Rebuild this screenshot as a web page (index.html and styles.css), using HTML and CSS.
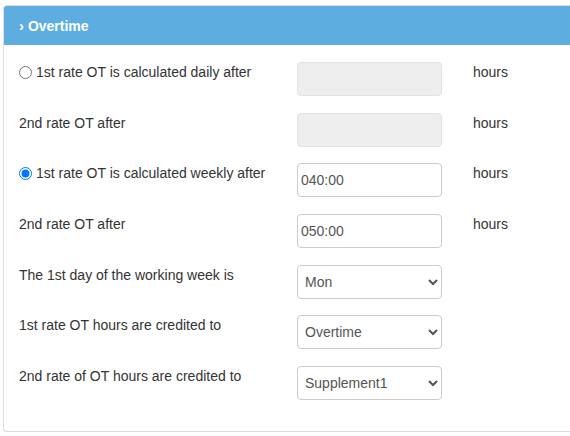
FILE: index.html
```html
<!DOCTYPE html>
<html lang="en">
<head>
    <meta charset="UTF-8">
    <meta name="viewport" content="width=device-width, initial-scale=1.0">
    <title>Overtime</title>
    <link rel="stylesheet" href="styles.css">
</head>
<body>
    <div class="panel">
        <div class="panel-heading">
            <span class="chevron">&rsaquo;</span> Overtime
        </div>

        <div class="panel-body">
            <!-- Daily overtime -->
            <label class="field-label">
                <input type="radio" name="ot-mode" value="daily">
                1st rate OT is calculated daily after
            </label>
            <input type="text" class="form-control" disabled>
            <span class="unit">hours</span>

            <label class="field-label">2nd rate OT after</label>
            <input type="text" class="form-control" disabled>
            <span class="unit">hours</span>

            <!-- Weekly overtime -->
            <label class="field-label">
                <input type="radio" name="ot-mode" value="weekly" checked>
                1st rate OT is calculated weekly after
            </label>
            <input type="text" class="form-control" value="040:00">
            <span class="unit">hours</span>

            <label class="field-label">2nd rate OT after</label>
            <input type="text" class="form-control" value="050:00">
            <span class="unit">hours</span>

            <label class="field-label">The 1st day of the working week is</label>
            <select class="form-control">
                <option>Mon</option>
                <option>Tue</option>
                <option>Wed</option>
                <option>Thu</option>
                <option>Fri</option>
                <option>Sat</option>
                <option>Sun</option>
            </select>
            <span class="unit"></span>

            <label class="field-label">1st rate OT hours are credited to</label>
            <select class="form-control">
                <option>Overtime</option>
                <option>Supplement1</option>
                <option>Supplement2</option>
            </select>
            <span class="unit"></span>

            <label class="field-label">2nd rate of OT hours are credited to</label>
            <select class="form-control">
                <option>Supplement1</option>
                <option>Overtime</option>
                <option>Supplement2</option>
            </select>
            <span class="unit"></span>
        </div>
    </div>
</body>
</html>
```

FILE: styles.css
```css
body {
    font-family: "Liberation Sans", Arial, sans-serif;
    font-size: 14px;
    line-height: 20px;
    color: #333;
    background-color: #fff;
    margin: 0;
    padding: 5px 0 0 3px;
}
/* the panel runs on past the right edge of the window */
.panel {
    border: 1px solid #ddd;
    border-right: none;
    border-radius: 4px 0 0 4px;
    background: #fff;
}
.panel-heading {
    height: 39px;
    line-height: 39px;
    padding: 0 15px;
    background-color: #5dade0;
    color: #fff;
    font-weight: bold;
    border-radius: 3px 0 0 0;
}
.chevron {
    font-size: 15px;
}
.panel-body {
    display: grid;
    grid-template-columns: 278px 145px auto;
    row-gap: 16.67px;
    padding: 17px 15px 31px;
}
.field-label {
    display: flex;
    align-items: flex-start;
    gap: 4px;
}
.field-label input[type="radio"] {
    width: 13px;
    height: 13px;
    margin: 4px 0 0 0;
}
.form-control {
    box-sizing: border-box;
    height: 34px;
    width: 145px;
    margin: 0;
    padding: 0 3px;
    font-family: "Liberation Sans", Arial, sans-serif;
    font-size: 14px;
    color: #555;
    background-color: #fff;
    border: 1px solid #ccc;
    border-radius: 4px;
}
.form-control:disabled {
    background-color: #eee;
    border-color: #e2e2e2;
}
.unit {
    margin-left: 31px;
}
```
